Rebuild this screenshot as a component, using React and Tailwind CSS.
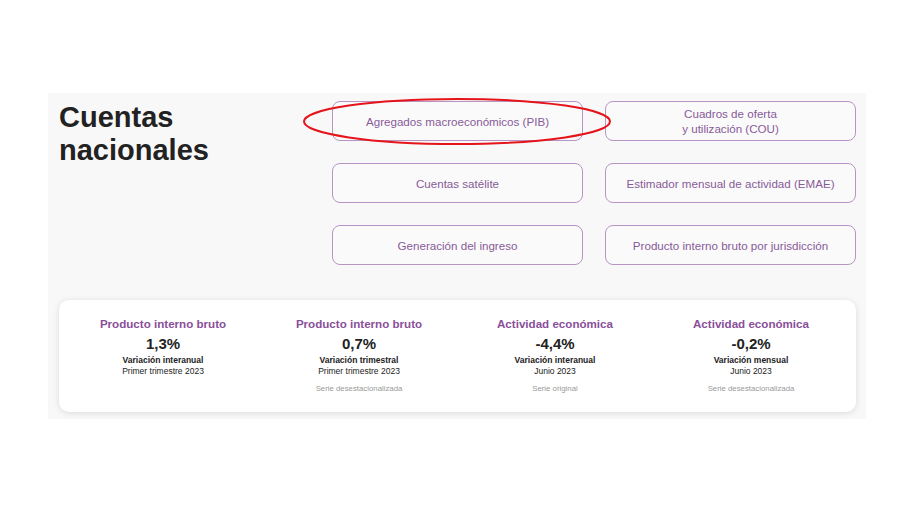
import React from 'react';

const links = [
  ['Agregados macroeconómicos (PIB)', 'Cuadros de oferta\ny utilización (COU)'],
  ['Cuentas satélite', 'Estimador mensual de actividad (EMAE)'],
  ['Generación del ingreso', 'Producto interno bruto por jurisdicción'],
];

const stats = [
  { title: 'Producto interno bruto', value: '1,3%', label: 'Variación interanual', period: 'Primer trimestre 2023', note: '' },
  { title: 'Producto interno bruto', value: '0,7%', label: 'Variación trimestral', period: 'Primer trimestre 2023', note: 'Serie desestacionalizada' },
  { title: 'Actividad económica', value: '-4,4%', label: 'Variación interanual', period: 'Junio 2023', note: 'Serie original' },
  { title: 'Actividad económica', value: '-0,2%', label: 'Variación mensual', period: 'Junio 2023', note: 'Serie desestacionalizada' },
];

const LinkButton = ({ text }) => (
  <a
    href="#"
    className="h-[40px] flex items-center justify-center text-center whitespace-pre-line rounded-[8px] border border-[#b894c4] bg-[#fbfafb] text-[11.6px] leading-[15px] text-[#875a98]"
  >
    {text}
  </a>
);

const StatCard = ({ s }) => (
  <div className="flex flex-col items-center text-center">
    <div className="text-[11.6px] leading-[14px] font-bold text-[#8a4f9a]">{s.title}</div>
    <div className="mt-[4px] text-[15px] leading-[18px] font-bold text-[#222]">{s.value}</div>
    <div className="mt-[2px] text-[8.5px] leading-[11px] font-bold text-[#222]">{s.label}</div>
    <div className="text-[8.5px] leading-[11px] text-[#222]">{s.period}</div>
    <div className="mt-[7px] h-[10px] text-[7.8px] leading-[10px] text-[#9a9a9a]">{s.note}</div>
  </div>
);

export default function App() {
  return (
    <div className="w-[915px] h-[514px] bg-white pt-[93px]" style={{ fontFamily: '"Liberation Sans", Arial, sans-serif' }}>
      <div className="ml-[48px] w-[818px] bg-[#f8f8f8] pt-[8px] pl-[11px] pr-[10px] pb-[7px]">
        <div className="flex">
          <h1 className="w-[273px] text-[29px] leading-[33px] font-bold text-[#222]">
            Cuentas
            <br />
            nacionales
          </h1>
          <div className="relative flex-1 grid grid-cols-2 gap-x-[22px] gap-y-[22px]">
            {links.flat().map((t, i) => (
              <LinkButton key={i} text={t} />
            ))}
            <svg className="absolute left-[-30px] top-[-4px] pointer-events-none" width="310" height="49" viewBox="0 0 310 49">
              <ellipse cx="155" cy="24.5" rx="153" ry="22.5" fill="none" stroke="#e5141b" strokeWidth="2" />
            </svg>
          </div>
        </div>
        <div className="mt-[35px] h-[112px] bg-white rounded-[10px] shadow-[0_1px_6px_rgba(0,0,0,0.12)] grid grid-cols-4 pt-[17px] pl-[6px] pr-[7px]">
          {stats.map((s, i) => (
            <StatCard key={i} s={s} />
          ))}
        </div>
      </div>
    </div>
  );
}
